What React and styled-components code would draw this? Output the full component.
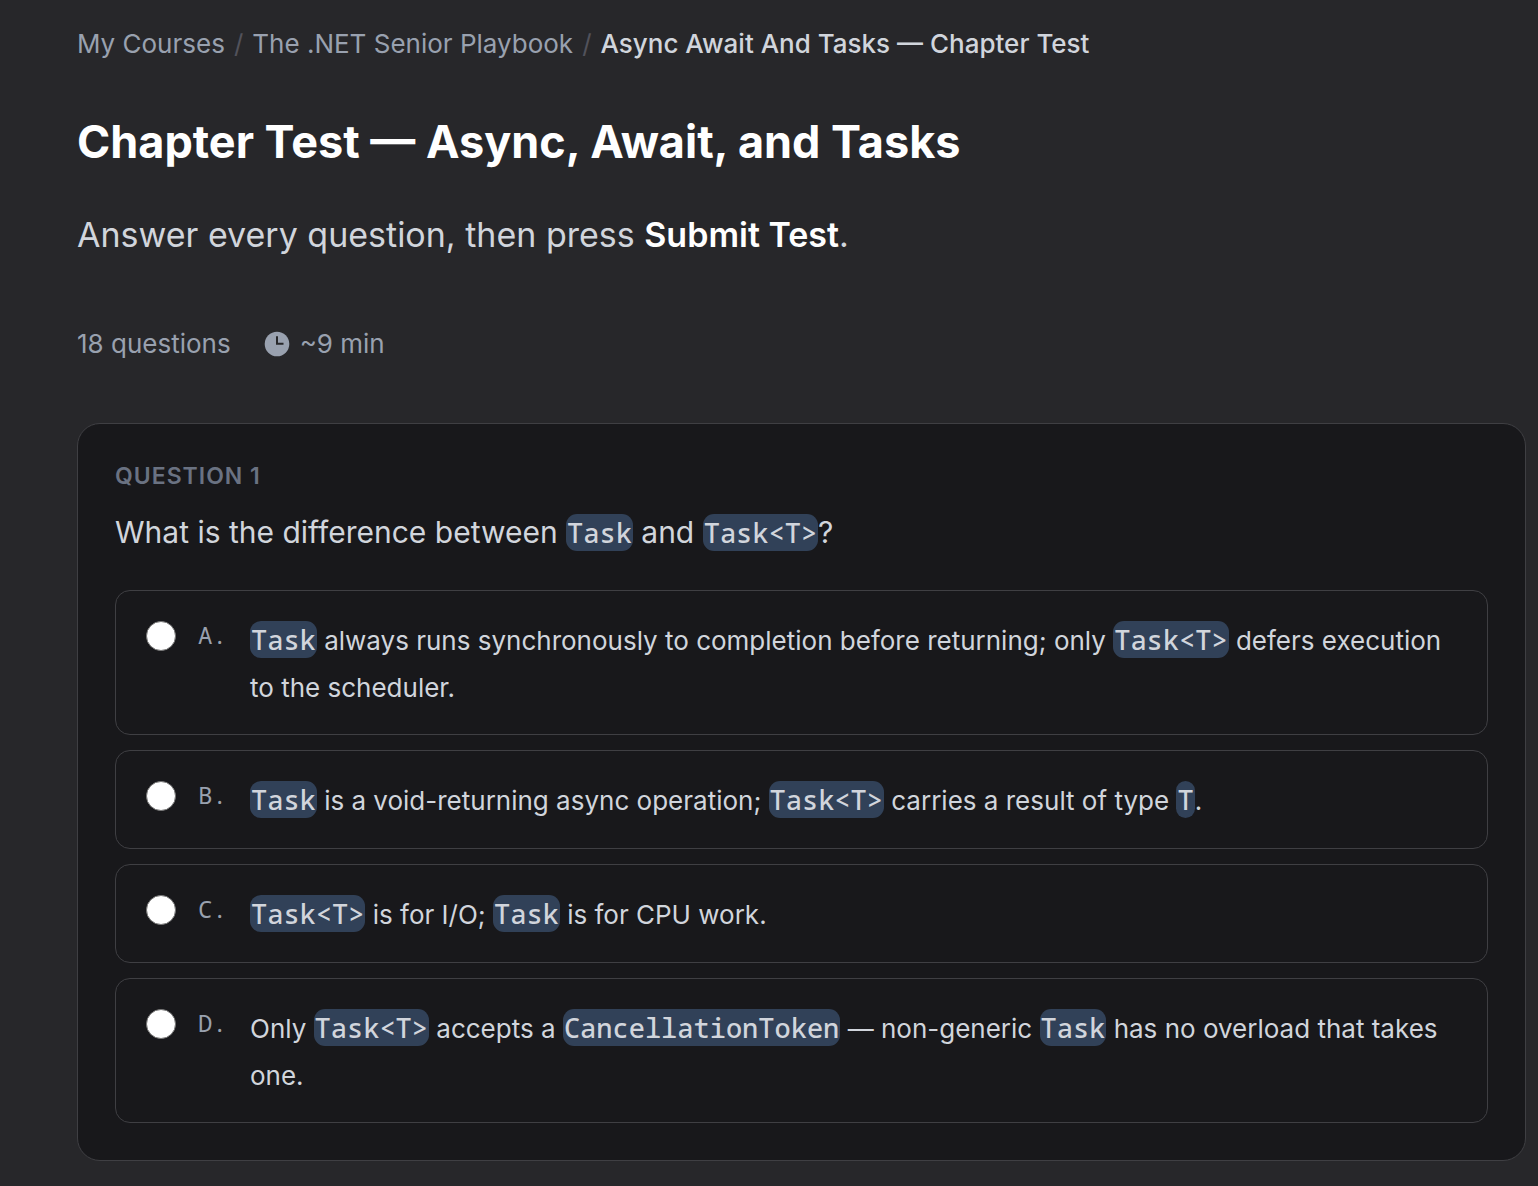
import React, { useState } from "react";
import styled, { createGlobalStyle } from "styled-components";

const sans = `Inter, "Liberation Sans", sans-serif`;
const mono = `"Noto Sans Mono", "DejaVu Sans Mono", monospace`;

const GlobalStyle = createGlobalStyle`
  *, *::before, *::after { box-sizing: border-box; }
  body {
    margin: 0;
    background: #27272a;
    color: #d1d5dc;
    font-family: ${sans};
  }
`;

const Page = styled.main`
  display: flex;
  flex-direction: column;
  padding: 24px 12px 24px 77px;
`;

const Breadcrumb = styled.nav`
  font-size: 26px;
  line-height: 40px;
  color: #99a1af;

  ol {
    display: flex;
    flex-wrap: wrap;
    margin: 0;
    padding: 0;
    list-style: none;
  }
  li + li::before {
    content: "/";
    margin: 0 9px;
    color: #52525b;
  }
`;

const CrumbLink = styled.a`
  color: inherit;
  text-decoration: none;
`;

const CurrentCrumb = styled.span`
  color: #d1d5dc;
  font-weight: 500;
`;

const Title = styled.h1`
  margin: 46px 0 0;
  font-size: 45px;
  line-height: 64px;
  font-weight: 700;
  color: #ffffff;
`;

const Intro = styled.p`
  margin: 31px 0 0;
  font-size: 34px;
  line-height: 60px;

  strong {
    color: #ffffff;
    font-weight: 600;
  }
`;

const Meta = styled.div`
  display: flex;
  align-items: center;
  gap: 33px;
  margin: 59px 0;
  font-size: 26px;
  line-height: 40px;
  color: #99a1af;
`;

const Duration = styled.span`
  display: flex;
  align-items: center;
  gap: 10px;
`;

const ClockIcon = styled.svg`
  width: 26px;
  height: 26px;
`;

const Card = styled.section`
  padding: 37px;
  border: 1px solid #3f3f43;
  border-radius: 23px;
  background: #18181b;
`;

const Label = styled.h2`
  margin: 0;
  font-size: 23px;
  line-height: 30px;
  font-weight: 600;
  letter-spacing: 1px;
  text-transform: uppercase;
  color: #6a7282;
`;

const Answers = styled.fieldset`
  display: flex;
  flex-direction: column;
  gap: 15px;
  min-width: 0;
  margin: 0;
  padding: 0;
  border: 0;
`;

const Prompt = styled.legend`
  padding: 16px 0 32px;
  font-size: 30px;
  line-height: 50px;
`;

const Code = styled.code`
  border-radius: 11px;
  padding: 0 1px;
  background: #314158;
  font-family: ${mono};
  font-size: 27px;
  font-weight: 500;
  line-height: 51px;
`;

const Option = styled.label`
  display: flex;
  align-items: flex-start;
  gap: 22px;
  padding: 23px 30px;
  border: 1px solid #3f3f43;
  border-radius: 15px;
  font-size: 26px;
  line-height: 46px;
  cursor: pointer;
`;

const Radio = styled.input`
  flex: none;
  appearance: none;
  width: 30px;
  height: 30px;
  margin: 7px 0 0;
  border: 1px solid #767676;
  border-radius: 50%;
  background: #ffffff;

  &:checked {
    border: 8px solid #3b82f6;
  }
`;

const Letter = styled.span`
  flex: none;
  width: 30px;
  font-family: ${mono};
  font-size: 24px;
  line-height: 42px;
  color: #99a1af;
`;

const Answer = styled.span`
  flex: 1;
  min-width: 0;
`;

const answers = [
  {
    letter: "A",
    text: (
      <>
        <Code>Task</Code> always runs synchronously to completion before returning; only{" "}
        <Code>Task&lt;T&gt;</Code> defers execution to the scheduler.
      </>
    ),
  },
  {
    letter: "B",
    text: (
      <>
        <Code>Task</Code> is a void-returning async operation; <Code>Task&lt;T&gt;</Code> carries a
        result of type <Code>T</Code>.
      </>
    ),
  },
  {
    letter: "C",
    text: (
      <>
        <Code>Task&lt;T&gt;</Code> is for I/O; <Code>Task</Code> is for CPU work.
      </>
    ),
  },
  {
    letter: "D",
    text: (
      <>
        Only <Code>Task&lt;T&gt;</Code> accepts a <Code>CancellationToken</Code> — non-generic{" "}
        <Code>Task</Code> has no overload that takes one.
      </>
    ),
  },
];

export default function App() {
  const [selected, setSelected] = useState(null);

  return (
    <>
      <GlobalStyle />
      <Page>
        <Breadcrumb aria-label="Breadcrumb">
          <ol>
            <li><CrumbLink href="#courses">My Courses</CrumbLink></li>
            <li><CrumbLink href="#playbook">The .NET Senior Playbook</CrumbLink></li>
            <li>
              <CurrentCrumb aria-current="page">Async Await And Tasks — Chapter Test</CurrentCrumb>
            </li>
          </ol>
        </Breadcrumb>
        <Title>Chapter Test — Async, Await, and Tasks</Title>
        <Intro>
          Answer every question, then press <strong>Submit Test</strong>.
        </Intro>
        <Meta>
          <span>18 questions</span>
          <Duration>
            <ClockIcon viewBox="0 0 26 26" aria-hidden="true">
              <circle cx="13" cy="13" r="12.3" fill="currentColor" />
              <path d="M13 5.2V12.7h6.5" fill="none" stroke="#27272a" strokeWidth="2" />
            </ClockIcon>
            ~9 min
          </Duration>
        </Meta>
        <Card>
          <Label>Question 1</Label>
          <Answers>
            <Prompt>
              What is the difference between <Code>Task</Code> and <Code>Task&lt;T&gt;</Code>?
            </Prompt>
            {answers.map(({ letter, text }) => (
              <Option key={letter}>
                <Radio
                  type="radio"
                  name="question-1"
                  value={letter}
                  checked={selected === letter}
                  onChange={() => setSelected(letter)}
                />
                <Letter>{letter}.</Letter>
                <Answer>{text}</Answer>
              </Option>
            ))}
          </Answers>
        </Card>
      </Page>
    </>
  );
}
